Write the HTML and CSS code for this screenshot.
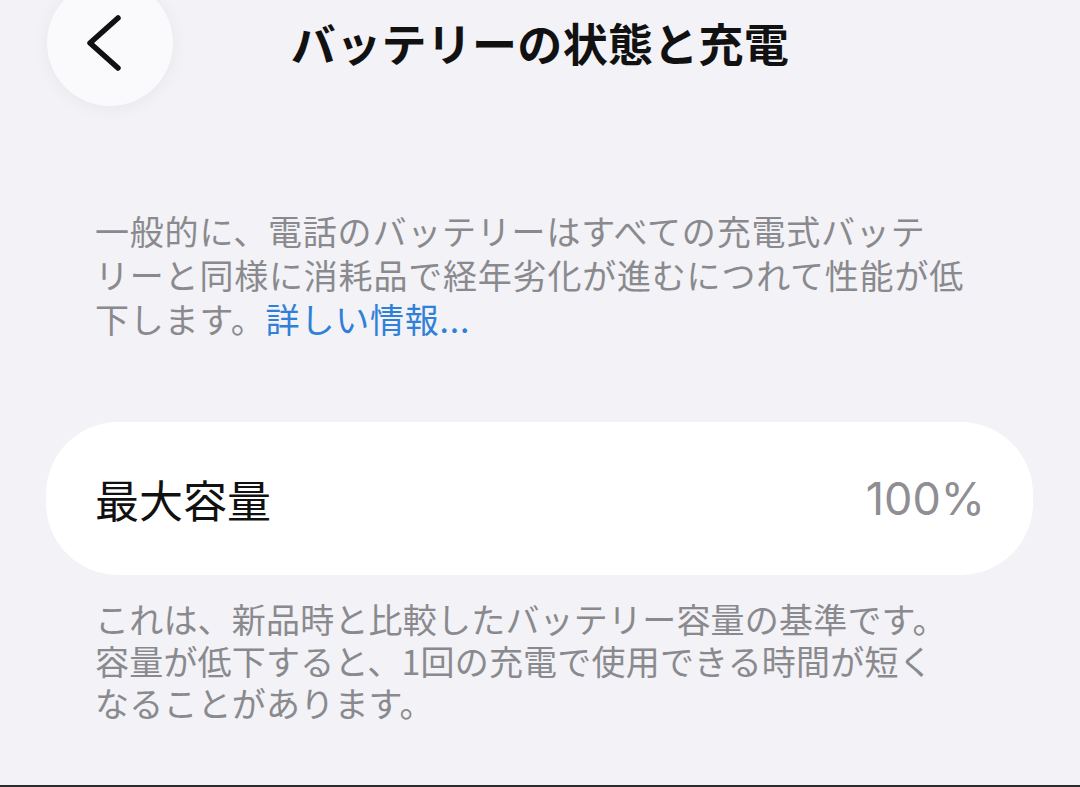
FILE: index.html
```html
<!DOCTYPE html>
<html lang="ja">
<head>
<meta charset="utf-8">
<title>バッテリーの状態と充電</title>
<link rel="stylesheet" href="styles.css">
</head>
<body>
<div class="page">
  <header class="nav">
    <div class="back">
      <svg width="126" height="126" viewBox="0 0 126 126" aria-hidden="true">
        <path d="M71 38 L43 63 L71 88" fill="none" stroke="#111" stroke-width="5.5" stroke-linecap="round" stroke-linejoin="round"/>
      </svg>
    </div>
    <h1 class="title">バッテリーの状態と充電</h1>
    <div class="spacer"></div>
  </header>

  <p class="note note-top">一般的に、電話のバッテリーはすべての充電式バッテ<br>リーと同様に消耗品で経年劣化が進むにつれて性能が低<br>下します。<a class="link" href="#">詳しい情報...</a></p>

  <section class="card">
    <span class="label">最大容量</span>
    <span class="value">100%</span>
  </section>

  <p class="note note-bottom">これは、新品時と比較したバッテリー容量の基準です。<br>容量が低下すると、1回の充電で使用できる時間が短く<br>なることがあります。</p>

  <div class="edge"></div>
</div>
</body>
</html>
```

FILE: styles.css
```css
html, body {
  margin: 0;
  padding: 0;
  height: 100%;
}

body {
  background: #f2f2f7;
  font-family: "Noto Sans CJK JP", "Noto Sans", sans-serif;
  overflow: hidden;
}

.page {
  min-height: 100vh;
  display: flex;
  flex-direction: column;
}

.nav {
  margin-top: -20px;
  height: 126px;
  display: grid;
  grid-template-columns: 1fr auto 1fr;
  align-items: center;
}

.back {
  margin-left: 47px;
  width: 126px;
  height: 126px;
  border-radius: 50%;
  background: #fafafc;
  box-shadow: 0 2px 18px rgba(0, 0, 0, 0.05);
  display: flex;
}

.title {
  margin: 0;
  font-size: 45px;
  font-weight: 700;
  line-height: 1.2;
  color: #111;
  letter-spacing: 0.3px;
}

.note {
  margin: 0;
  padding: 0 40px 0 95px;
  color: #8a8a8e;
  font-size: 34px;
}

.note-top {
  margin-top: 103px;
  line-height: 44px;
  letter-spacing: 0.8px;
}

.link {
  color: #2f80d8;
  text-decoration: none;
}

.card {
  margin: 81px 47px 0 46px;
  height: 153px;
  border-radius: 72px;
  background: #ffffff;
  display: flex;
  align-items: center;
  justify-content: space-between;
  padding: 0 48px 0 49px;
}

.label {
  font-size: 44px;
  color: #111;
}

.value {
  font-family: "Inter", "Liberation Sans", sans-serif;
  font-size: 45px;
  font-weight: 400;
  color: #8e8e93;
}

.note-bottom {
  margin-top: 23px;
  line-height: 42px;
  letter-spacing: 0.2px;
}

.edge {
  margin-top: auto;
  height: 2px;
  background: #2c2c2e;
}
```
